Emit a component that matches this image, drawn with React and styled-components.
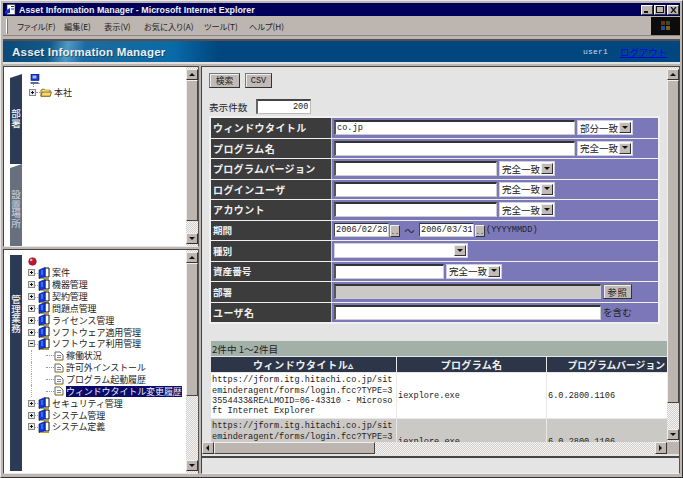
import React from "react";
import styled, { createGlobalStyle } from "styled-components";

const CJK = `"Noto Sans CJK JP", "Liberation Sans", sans-serif`;
const MONO = `"Liberation Mono", "Noto Sans CJK JP", monospace`;
const DITHER = `repeating-conic-gradient(#d4d0ce 0 25%, #f4f4f4 0 50%) 0 0 / 2px 2px`;

const Global = createGlobalStyle`
  * { box-sizing: border-box; }
  html, body { margin: 0; padding: 0; background: #bdb5b0; }
  #root { width: 683px; height: 478px; overflow: hidden; }
`;

const Win = styled.div`
  width: 683px; height: 478px; overflow: hidden;
  display: flex; flex-direction: column;
  background: #bdb5b0;
  border-left: 1px solid #e8e8e8; border-top: 1px solid #e8e8e8;
  border-right: 1px solid #333; border-bottom: 1px solid #333;
  padding: 2px;
  font-family: ${CJK}; color: #222;
`;
const TitleBar = styled.div`
  height: 13px; flex: none; background: #00005a;
  display: flex; align-items: center; padding: 0 1px 0 2px; gap: 3px;
  color: #f0f0f0; font: bold 8.9px "Liberation Sans", sans-serif;
`;
const TitleText = styled.span` flex: 1; white-space: nowrap; `;
const WinButtons = styled.div` display: flex; gap: 1px; `;
const WinBtn = styled.div`
  width: 12px; height: 10px; background: #bdb5b0;
  border: 1px solid; border-color: #fff #333 #333 #fff;
  display: flex; align-items: center; justify-content: center;
`;
const MenuBar = styled.div`
  height: 19px; flex: none; margin-top: 1px; display: flex; align-items: center;
  border-bottom: 1px solid #8d8784;
`;
const Grip = styled.div`
  width: 2px; height: 15px; margin: 0 9px 0 3px;
  border-left: 1px solid #fff; border-right: 1px solid #777;
`;
const MenuItem = styled.span`
  width: ${p => p.$w}px; flex: none; font-size: 8.2px; color: #222; white-space: nowrap;
  font-feature-settings: "palt";
`;
const Throbber = styled.div`
  margin-left: auto; width: 29px; height: 18px; background: #0c0c0c;
  display: flex; align-items: center; justify-content: center;
`;
const Banner = styled.div`
  height: 25px; flex: none; margin-top: 3px; padding: 0 13px 0 9px;
  border-top: 2px solid #55504e; border-bottom: 2px solid #e0e0e0;
  background:
    linear-gradient(100deg, rgba(255,255,255,0) 22%, rgba(130,200,235,.55) 30%, rgba(30,110,170,.7) 38%, rgba(0,71,127,0) 48%) 0 0 / 215px 100% no-repeat,
    linear-gradient(90deg, #0c4a78 0, #1a6a9c 100px, #0a6aa8 170px, #00477f 214px, #00477f 100%);
  display: flex; align-items: center;
`;
const BannerTitle = styled.span`
  font: bold 11.6px "Liberation Sans", sans-serif; color: #e6eef2; letter-spacing: .16px;
  text-shadow: 1px 1px 0 rgba(0,0,0,.35); white-space: nowrap;
`;
const User = styled.span`
  margin-left: auto; font: 8px ${MONO}; color: #c8dcec; letter-spacing: .2px;
`;
const Logout = styled.a`
  margin-left: 12px; font-size: 9.4px; color: #0000f0; text-decoration: underline;
`;
const Main = styled.div`
  flex: 1; min-height: 0; margin-top: 2px; display: flex; gap: 2px; padding-bottom: 1px;
`;
const LeftCol = styled.div`
  width: 196px; flex: none; display: flex; flex-direction: column; gap: 2px;
`;
const Panel = styled.div`
  flex: ${p => p.$flex}; min-height: 0; display: flex; background: #fff;
  border: 1px solid; border-color: #444 #555 #e8e8e8 #444;
`;
const TreeArea = styled.div`
  flex: 1; min-width: 0; display: flex; padding: ${p => p.$top}px 0 0 6px; overflow: hidden;
`;
const TabCol = styled.div`
  width: 12px; flex: none; display: flex; flex-direction: column;
`;
const Tab = styled.div`
  height: ${p => p.$h}px; flex: none;
  background: ${p => (p.$on ? "#2b3b55" : "#687080")};
  color: ${p => (p.$on ? "#f2f2f2" : "#c4c8cf")};
  clip-path: ${p => (p.$flat ? "none" : "polygon(0 4px, 100% 0, 100% 100%, 0 100%)")};
  font-size: 9.5px; line-height: 9.7px; text-align: center; word-break: break-all;
  padding-top: ${p => p.$pt}px; font-weight: 500;
  overflow: hidden;
`;
const Tree = styled.div`
  flex: 1; min-width: 0; padding: 0 0 0 ${p => p.$pl}px; font-size: 9px; color: #222;
`;
const TreeRow = styled.div`
  height: ${p => p.$h}px; display: flex; align-items: center; white-space: nowrap;
`;
const RootIcon = styled.div` height: 12px; padding-left: ${p => p.$pl}px; display: flex; align-items: center; `;
const Label = styled.span`
  margin-left: 2px; letter-spacing: -.1px;
  background: ${p => (p.$sel ? "#0a0a6a" : "transparent")};
  color: ${p => (p.$sel ? "#eee" : "#222")};
  line-height: 11px;
`;
const Dots = styled.span`
  width: ${p => p.$w}px; margin-left: ${p => p.$ml || 0}px; flex: none; border-top: 1px dotted #999;
`;
const Guide = styled.span`
  width: 1px; height: 100%; flex: none; margin-left: 3px; border-left: 1px dotted #aaa;
`;

const VBar = styled.div`
  width: 12px; flex: none; display: flex; flex-direction: column; background: ${DITHER};
  padding: 2px 0;
`;
const HBar = styled.div`
  height: 12px; flex: 1; display: flex; background: ${DITHER}; min-width: 0;
`;
const SBtn = styled.div`
  width: ${p => p.$w || 12}px; height: ${p => p.$hh || 11}px; flex: none; background: #bdb5b0;
  border: 1px solid; border-color: #efefef #333 #333 #efefef;
  display: flex; align-items: center; justify-content: center;
`;
const Thumb = styled.div`
  flex: 0 0 ${p => p.$h}px;
  background: #bdb5b0; border: 1px solid; border-color: #efefef #444 #444 #efefef;
`;
const Fill = styled.div` flex: 1; `;

const Right = styled.div`
  flex: 1; min-width: 0; display: flex; flex-direction: column; background: #e4e4e4;
  border: 1px solid; border-color: #444 #555 #eee #444;
`;
const ContentRow = styled.div` flex: 1; min-height: 0; display: flex; `;
const Content = styled.div`
  flex: 1; min-width: 0; overflow: hidden; padding: 6px 0 0 7px;
`;
const BtnRow = styled.div` display: flex; gap: 5px; `;
const Btn = styled.div`
  height: 15px; width: ${p => p.$w}px; background: #c2bab6; flex: none;
  border: 1px solid #4a4a4a; border-color: #777 #333 #333 #777;
  box-shadow: inset 1px 1px 0 #efefef;
  display: flex; align-items: center; justify-content: center;
  font: ${p => p.$fs}px ${p => (p.$mono ? MONO : CJK)}; color: #222; letter-spacing: ${p => p.$ls || 0}px;
`;
const CountRow = styled.div`
  display: flex; align-items: center; margin: 11px 0 2px; height: 15px; font-size: 9.6px;
`;
const CountInput = styled.input`
  width: 55px; height: 15px; margin-left: 9px; padding: 0 2px; text-align: right;
  font: 8.6px ${MONO}; color: #222; background: #fff; outline: 0;
  border: 1px solid; border-width: 2px 1px 1px 2px; border-color: #444 #bbb #bbb #666;
`;
const FormTable = styled.div`
  width: 451px; height: 208px; background: #f0f0f0; padding: 2px;
  display: grid; grid-auto-rows: 1fr; gap: 1px;
`;
const FormRow = styled.div`
  display: grid; grid-template-columns: 120px 1fr; column-gap: 1px; background: #c8c8c8; min-height: 0;
`;
const FormLabel = styled.div`
  background: #3c3c3c; color: #f0f0f0; font-size: ${p => (p.$small ? 9.6 : 10)}px; font-weight: 700;
  display: flex; align-items: center; padding-left: 2px; letter-spacing: ${p => p.$ls || 0}px; white-space: nowrap;
`;
const FormValue = styled.div`
  background: #7a78b8; display: flex; align-items: center; padding-left: 2px; gap: 2px; white-space: nowrap;
`;
const Field = styled.input`
  width: ${p => p.$w}px; height: 15px; flex: none; padding: 0 1px; outline: 0;
  font: 8.6px ${MONO}; color: #222; background: ${p => (p.$gray ? "#cbc9c6" : "#fff")};
  border: 1px solid; border-width: 2px 1px 1px 2px; border-color: #333 #ccc #ccc #555;
`;
const DateField = styled(Field)`
  border-width: 1px; border-color: #333 #ccc #ccc #444; height: 14px;
`;
const DateBtn = styled.div`
  width: 10px; height: 12px; margin: 2px 0 0 -1px; flex: none; background: #c2bab6;
  border: 1px solid; border-color: #eee #333 #333 #eee; font: 7px ${MONO};
  display: flex; align-items: flex-end; justify-content: center; line-height: 7px; color: #222;
`;
const Tilde = styled.span`
  width: 15px; flex: none; text-align: center; font-size: 10px; color: #222;
`;
const DateHint = styled.span` font: 8.6px ${MONO}; color: #222; margin-left: -1px; `;
const Sel = styled.div`
  width: ${p => p.$w}px; height: 15px; flex: none; background: #fff; display: flex; align-items: center;
  justify-content: space-between; padding: 1px;
  font-size: 9.5px; color: #222; border: 1px solid #cfcfe4;
`;
const SelBtn = styled.div`
  width: 12px; height: 11px; flex: none; background: #c2bab6;
  border: 1px solid; border-color: #eee #333 #333 #eee;
  display: flex; align-items: center; justify-content: center;
`;
const SelText = styled.span` padding-left: 1px; line-height: 12px; `;
const ValText = styled.span` font-size: 9.6px; color: #222; `;

const ResultBar = styled.div`
  margin: 17px 0 0 2px; height: 15px; background: #a3b0a8; display: flex; align-items: center;
  padding-left: 1px; font-size: 9.6px; color: #222; white-space: nowrap;
`;
const ListGrid = styled.div`
  margin: 1px 0 0 2px; display: grid; grid-template-columns: 185px 149px 120px; column-gap: 1px; row-gap: 1px;
  background: #e8e8e8;
`;
const Th = styled.div`
  height: 15px; background: #2d3648; color: #f0f0f0; font-size: ${p => p.$fs || 10}px; font-weight: 700;
  display: flex; align-items: center; justify-content: ${p => p.$align || "center"}; white-space: nowrap;
  letter-spacing: ${p => p.$ls || 0}px; padding-right: ${p => p.$pr || 0}px;
`;
const Td = styled.div`
  height: 45px; background: ${p => (p.$alt ? "#cbc9c6" : "#fff")}; padding: 1px 1px 0 1px;
  font: 8.6px/10.4px ${MONO}; color: #222; word-break: break-all;
  display: flex; align-items: center;
`;
const HRow = styled.div` height: 12px; flex: none; display: flex; `;
const Corner = styled.div` width: 12px; flex: none; background: #bdb5b0; `;
const Status = styled.div`
  height: 17px; flex: none; margin-top: 2px; border-top: 2px solid #444; background: #e4e4e4;
`;
const ArrowSvg = styled.svg` display: block; flex: none; `;
const IconSvg = styled.svg` display: block; flex: none; `;

const Arrow = ({ d }) => {
  const pts = { up: "0,4 3,1 6,4", down: "0,1 6,1 3,4", left: "4,0 4,6 1,3", right: "1,0 1,6 4,3" }[d];
  return <ArrowSvg width="6" height="6" viewBox="0 0 6 6"><polygon points={pts} fill="#111" /></ArrowSvg>;
};

const VScroll = ({ thumb }) => (
  <VBar>
    <SBtn><Arrow d="up" /></SBtn>
    <Thumb $h={thumb} />
    <Fill />
    <SBtn><Arrow d="down" /></SBtn>
  </VBar>
);

const Plus = ({ minus }) => (
  <IconSvg width="7" height="7" viewBox="0 0 7 7">
    <rect x=".5" y=".5" width="6" height="6" fill="#e8e8e8" stroke="#888" />
    <path d={minus ? "M2 3.5H5" : "M2 3.5H5M3.5 2V5"} stroke="#111" />
  </IconSvg>
);
const Book = () => (
  <IconSvg width="15" height="12" viewBox="0 0 15 12">
    <path d="M0 6.5H3" stroke="#aaa" strokeDasharray="1 1" />
    <path d="M10 1H14V10H10Z" fill="#fff" stroke="#111" />
    <path d="M4 3L10 .5V10L4 11.5Z" fill="#1438e0" stroke="#0a1a70" strokeWidth=".7" />
    <path d="M7 3V8" stroke="#50b0ff" />
    <path d="M5 11.5H14" stroke="#b8a020" />
  </IconSvg>
);
const Page = () => (
  <IconSvg width="10" height="10" viewBox="0 0 10 10">
    <path d="M1 1H6L9 4V9H1Z" fill="#fff" stroke="#666" />
    <path d="M3 4.5H7M3 6.5H7" stroke="#888" />
    <path d="M1 9.5H9" stroke="#c8b040" />
  </IconSvg>
);
const Folder = () => (
  <IconSvg width="12" height="11" viewBox="0 0 13 11">
    <path d="M2 2H5L6 3H11V9.5H1V3Z" fill="#f4cc50" stroke="#6a5010" strokeWidth=".8" />
    <path d="M3 4.5H10V3.3H3Z" fill="#fff6c8" />
    <path d="M1 9.5L2.5 5H12.5L11 9.5Z" fill="#f8d868" stroke="#6a5010" strokeWidth=".8" />
  </IconSvg>
);
const Computer = () => (
  <IconSvg width="12" height="13" viewBox="0 0 12 13">
    <rect x="2" y="0" width="8" height="6.5" fill="#2030c0" stroke="#101860" strokeWidth=".6" />
    <rect x="3.5" y="1.5" width="4" height="3" fill="#90c0ff" />
    <path d="M1 8H9L11 10H2Z" fill="#5a70a8" />
    <path d="M4.5 10V13" stroke="#888" strokeDasharray="1 1" />
  </IconSvg>
);
const RedBall = () => (
  <IconSvg width="9" height="9" viewBox="0 0 9 9">
    <circle cx="4.5" cy="4.5" r="3.8" fill="#c01830" stroke="#801020" strokeWidth=".6" />
    <circle cx="3.2" cy="3" r="1.3" fill="#f6b0b8" />
  </IconSvg>
);
const IeIcon = () => (
  <IconSvg width="11" height="11" viewBox="0 0 11 11">
    <rect x="2" y=".5" width="8" height="10" fill="#fff" stroke="#333" strokeWidth=".6" />
    <path d="M0 7L5 4V9L0 10Z" fill="#1030c8" />
    <path d="M6 2.5H9M6 5H9" stroke="#1030c8" />
  </IconSvg>
);
const Flag = () => (
  <IconSvg width="11" height="12" viewBox="0 0 11 12">
    <rect x="1" y="1" width="4" height="4" fill="#6a3020" />
    <rect x="6" y="1" width="4" height="4" fill="#3a4a20" />
    <rect x="1" y="6" width="4" height="4" fill="#2a4a90" />
    <rect x="6" y="6" width="4" height="4" fill="#7a6020" />
  </IconSvg>
);

const ROW = 11.85;
const treeTop = ["案件", "機器管理", "契約管理", "問題点管理", "ライセンス管理", "ソフトウェア適用管理"];
const treeBottom = ["セキュリティ管理", "システム管理", "システム定義"];
const children = ["稼働状況", "許可外インストール", "プログラム起動履歴", "ウィンドウタイトル変更履歴"];
const menus = [["ファイル(F)", 47], ["編集(E)", 40], ["表示(V)", 40], ["お気に入り(A)", 60], ["ツール(T)", 45], ["ヘルプ(H)", 40]];
const URL_TEXT = "https://jform.itg.hitachi.co.jp/siteminderagent/forms/login.fcc?TYPE=33554433&REALMOID=06-43310 - Microsoft Internet Explorer";

const Select = ({ w, text }) => (
  <Sel $w={w}><SelText>{text}</SelText><SelBtn><Arrow d="down" /></SelBtn></Sel>
);

export default function App() {
  return (
    <>
      <Global />
      <Win>
        <TitleBar>
          <IeIcon />
          <TitleText>Asset Information Manager - Microsoft Internet Explorer</TitleText>
          <WinButtons>
            <WinBtn><svg width="6" height="6"><rect x="0" y="4" width="4" height="2" fill="#111" /></svg></WinBtn>
            <WinBtn><svg width="8" height="7"><rect x=".5" y=".5" width="7" height="6" fill="none" stroke="#111" /></svg></WinBtn>
            <WinBtn><svg width="7" height="6"><path d="M1 0L6 6M6 0L1 6" stroke="#111" strokeWidth="1.2" /></svg></WinBtn>
          </WinButtons>
        </TitleBar>
        <MenuBar>
          <Grip />
          {menus.map(([m, w]) => <MenuItem key={m} $w={w}>{m}</MenuItem>)}
          <Throbber><Flag /></Throbber>
        </MenuBar>
        <Banner>
          <BannerTitle>Asset Information Manager</BannerTitle>
          <User>user1</User>
          <Logout>ログアウト</Logout>
        </Banner>
        <Main>
          <LeftCol>
            <Panel $flex="0 0 181px">
              <TreeArea $top={7}>
                <TabCol>
                  <Tab $on $h={90} $pt={35}>部署</Tab>
                  <Tab $h={82} $pt={26}>設置場所</Tab>
                </TabCol>
                <Tree $pl={7}>
                  <RootIcon $pl={0}><Computer /></RootIcon>
                  <TreeRow $h={12}><Plus /><Dots $w={4} /><Folder /><Label>本社</Label></TreeRow>
                </Tree>
              </TreeArea>
              <VScroll thumb={141} />
            </Panel>
            <Panel $flex="1">
              <TreeArea $top={5}>
                <TabCol>
                  <Tab $on $flat $h={216} $pt={40}>管理業務</Tab>
                </TabCol>
                <Tree $pl={6}>
                  <RootIcon $pl={0}><RedBall /></RootIcon>
                  {treeTop.map(t => <TreeRow $h={ROW} key={t}><Plus /><Book /><Label>{t}</Label></TreeRow>)}
                  <TreeRow $h={ROW}><Plus minus /><Book /><Label>ソフトウェア利用管理</Label></TreeRow>
                  {children.map((c, i) => (
                    <TreeRow $h={ROW} key={c}>
                      <Guide />
                      <Dots $w={8} $ml={14} />
                      <Page />
                      <Label $sel={i === 3}>{c}</Label>
                    </TreeRow>
                  ))}
                  {treeBottom.map(t => <TreeRow $h={ROW} key={t}><Plus /><Book /><Label>{t}</Label></TreeRow>)}
                </Tree>
              </TreeArea>
              <VScroll thumb={133} />
            </Panel>
          </LeftCol>
          <Right>
            <ContentRow>
              <Content>
                <BtnRow>
                  <Btn $w={31} $fs={8.8}>検索</Btn>
                  <Btn $w={27} $fs={8.6} $mono>CSV</Btn>
                </BtnRow>
                <CountRow>表示件数<CountInput readOnly value="200" /></CountRow>
                <FormTable>
                  <FormRow><FormLabel $ls={.4}>ウィンドウタイトル</FormLabel><FormValue><Field $w={241} readOnly value="co.jp" /><Select w={56} text="部分一致" /></FormValue></FormRow>
                  <FormRow><FormLabel $ls={.4}>プログラム名</FormLabel><FormValue><Field $w={241} readOnly value="" /><Select w={56} text="完全一致" /></FormValue></FormRow>
                  <FormRow><FormLabel $ls={.3}>プログラムバージョン</FormLabel><FormValue><Field $w={163} readOnly value="" /><Select w={56} text="完全一致" /></FormValue></FormRow>
                  <FormRow><FormLabel $ls={.4}>ログインユーザ</FormLabel><FormValue><Field $w={163} readOnly value="" /><Select w={56} text="完全一致" /></FormValue></FormRow>
                  <FormRow><FormLabel $ls={.4}>アカウント</FormLabel><FormValue><Field $w={163} readOnly value="" /><Select w={56} text="完全一致" /></FormValue></FormRow>
                  <FormRow>
                    <FormLabel $small>期間</FormLabel>
                    <FormValue>
                      <DateField $w={55} readOnly value="2006/02/28" /><DateBtn>..</DateBtn>
                      <Tilde>～</Tilde>
                      <DateField $w={55} readOnly value="2006/03/31" /><DateBtn>..</DateBtn>
                      <DateHint>(YYYYMMDD)</DateHint>
                    </FormValue>
                  </FormRow>
                  <FormRow><FormLabel $small>種別</FormLabel><FormValue><Select w={134} text="" /></FormValue></FormRow>
                  <FormRow><FormLabel $small>資産番号</FormLabel><FormValue><Field $w={110} readOnly value="" /><Select w={56} text="完全一致" /></FormValue></FormRow>
                  <FormRow><FormLabel $small>部署</FormLabel><FormValue><Field $gray $w={267} readOnly value="" /><Btn $w={29} $fs={9.4} $ls={.8}>参照</Btn></FormValue></FormRow>
                  <FormRow><FormLabel $ls={.4}>ユーザ名</FormLabel><FormValue><Field $w={267} readOnly value="" /><ValText>を含む</ValText></FormValue></FormRow>
                </FormTable>
                <ResultBar>2件中 1～2件目</ResultBar>
                <ListGrid>
                  <Th $ls={.6}>ウィンドウタイトル▵</Th>
                  <Th $ls={.3}>プログラム名</Th>
                  <Th $fs={9.8} $align="flex-end" $pr={2}>プログラムバージョン</Th>
                  <Td>{URL_TEXT}</Td>
                  <Td>iexplore.exe</Td>
                  <Td>6.0.2800.1106</Td>
                  <Td $alt>{URL_TEXT}</Td>
                  <Td $alt>iexplore.exe</Td>
                  <Td $alt>6.0.2800.1106</Td>
                </ListGrid>
              </Content>
              <VScroll thumb={323} />
            </ContentRow>
            <HRow>
              <HBar>
                <SBtn $hh={12}><Arrow d="left" /></SBtn>
                <Thumb $h={161} />
                <Fill />
                <SBtn $hh={12}><Arrow d="right" /></SBtn>
              </HBar>
              <Corner />
            </HRow>
            <Status />
          </Right>
        </Main>
      </Win>
    </>
  );
}
